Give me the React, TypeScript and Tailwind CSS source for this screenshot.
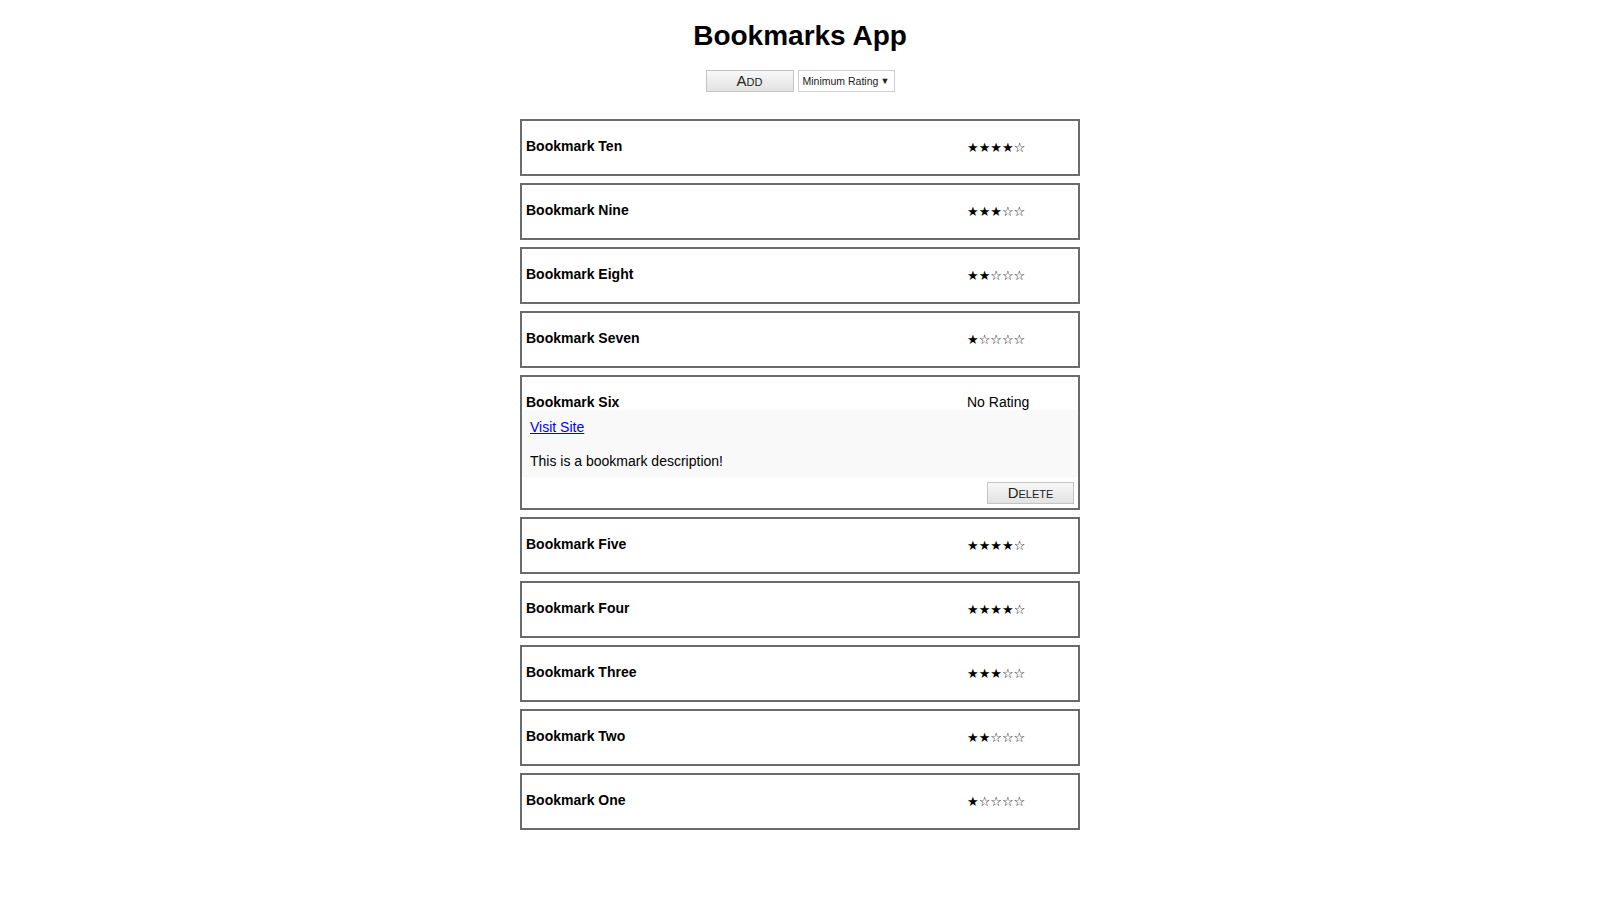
import React from "react";

type Bookmark = {
  id: number;
  title: string;
  rating: number | null;
  url?: string;
  description?: string;
  expanded?: boolean;
};

const bookmarks: Bookmark[] = [
  { id: 10, title: "Bookmark Ten", rating: 4 },
  { id: 9, title: "Bookmark Nine", rating: 3 },
  { id: 8, title: "Bookmark Eight", rating: 2 },
  { id: 7, title: "Bookmark Seven", rating: 1 },
  {
    id: 6,
    title: "Bookmark Six",
    rating: null,
    url: "#",
    description: "This is a bookmark description!",
    expanded: true,
  },
  { id: 5, title: "Bookmark Five", rating: 4 },
  { id: 4, title: "Bookmark Four", rating: 4 },
  { id: 3, title: "Bookmark Three", rating: 3 },
  { id: 2, title: "Bookmark Two", rating: 2 },
  { id: 1, title: "Bookmark One", rating: 1 },
];

function Stars({ rating }: { rating: number | null }) {
  if (rating === null) return <span className="text-[14px] leading-[16px]">No Rating</span>;
  return (
    <span className="text-[13px] leading-[16px] font-['DejaVu_Sans',sans-serif] relative top-[2px]">
      {"★".repeat(rating)}
      {"☆".repeat(5 - rating)}
    </span>
  );
}

function BookmarkCard({ bookmark }: { bookmark: Bookmark }) {
  return (
    <li className="border-2 border-[#6b6b6b] bg-white">
      <div className={`px-[4px] pt-[17px] ${bookmark.expanded ? "" : "pb-[20px]"}`}>
        <div className="flex items-start h-[16px]">
          <h3 className="w-[441px] shrink-0 text-[14px] leading-[16px] font-bold">{bookmark.title}</h3>
          <Stars rating={bookmark.rating} />
        </div>
      </div>

      {bookmark.expanded && (
        <>
          <div className="bg-[#f9f9f9] px-[8px] pt-[9px] pb-[8px] text-[14px] leading-[16px]">
            <a href={bookmark.url} className="text-[#0000ee] underline">
              Visit Site
            </a>
            <p className="mt-[18px]">{bookmark.description}</p>
          </div>
          <div className="flex justify-end px-[4px] pt-[5px] pb-[4px]">
            <button className="w-[87px] h-[22px] border border-[#c4c4c4] bg-gradient-to-b from-[#f8f8f8] to-[#e2e2e2] text-[15px] leading-[18px] [font-variant:small-caps] text-[#222]">
              Delete
            </button>
          </div>
        </>
      )}
    </li>
  );
}

export default function App() {
  return (
    <div className="min-h-screen bg-white text-black font-['Liberation_Sans',Arial,sans-serif]">
      <header className="pt-[20px] text-center">
        <h1 className="text-[28px] leading-[32px] font-bold">Bookmarks App</h1>

        <div className="mt-[18px] flex justify-center gap-[4px]">
          <button className="w-[88px] h-[22px] border border-[#c4c4c4] bg-gradient-to-b from-[#f8f8f8] to-[#e2e2e2] text-[15px] leading-[18px] [font-variant:small-caps] text-[#222]">
            Add
          </button>
          <div className="w-[97px] h-[22px] border border-[#cfcfcf] bg-white flex items-center justify-between whitespace-nowrap pl-[4px] pr-[4px] pt-[2px] text-[10.5px] text-[#222]">
            <span>Minimum Rating</span>
            <span className="text-[9px]">▼</span>
          </div>
        </div>
      </header>

      <ul className="w-[560px] mx-auto mt-[27px] flex flex-col gap-[7px] pb-[80px]">
        {bookmarks.map((b) => (
          <BookmarkCard key={b.id} bookmark={b} />
        ))}
      </ul>
    </div>
  );
}
